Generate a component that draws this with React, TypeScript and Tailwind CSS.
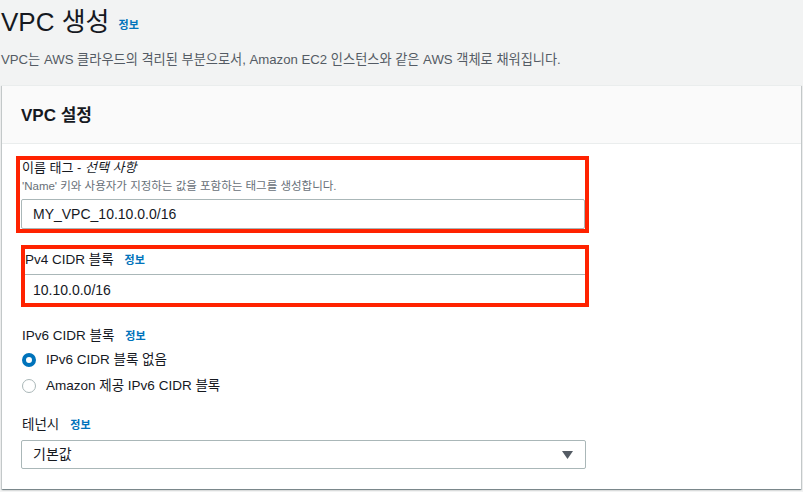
import type { ReactNode } from 'react'

const font = { fontFamily: '"Liberation Sans", "Noto Sans CJK KR", sans-serif' }

function InfoLink() {
  return <span className="ml-[11px] text-[11px] font-bold text-[#0073bb]">정보</span>
}

function Radio({ checked, children }: { checked?: boolean; children: ReactNode }) {
  return (
    <div className="flex h-[26px] items-center">
      <span
        className={`box-border h-[14px] w-[14px] rounded-full bg-white ${
          checked ? 'border-[4px] border-[#0073bb]' : 'border border-[#aab7b8]'
        }`}
      />
      <span className="ml-[10px] text-[13.5px] text-[#16191f]">{children}</span>
    </div>
  )
}

export default function App() {
  return (
    <div className="h-[492px] w-[803px] overflow-hidden bg-[#f2f3f3] text-[#16191f]" style={font}>
      <div className="flex h-[40px] items-center pt-[4px] pl-[1px]">
        <h1 className="text-[26px] leading-none font-normal">VPC 생성</h1>
        <span className="ml-[9px] mt-[7px] text-[11px] font-bold text-[#0073bb]">정보</span>
      </div>
      <p className="mt-[10px] h-[20px] pl-[1px] text-[13.2px] leading-[20px] text-[#545b64]">
        VPC는 AWS 클라우드의 격리된 부분으로서, Amazon EC2 인스턴스와 같은 AWS 객체로 채워집니다.
      </p>

      <section className="mt-[15px] ml-[2px] w-[799px] bg-white shadow-[0_1px_1px_0_rgba(0,28,36,0.3),1px_1px_1px_0_rgba(0,28,36,0.15),-1px_1px_1px_0_rgba(0,28,36,0.15)]">
        <div className="flex h-[59px] items-center border-y border-[#eaeded] bg-[#fafafa] pl-[19px]">
          <h2 className="mt-[2px] text-[17px] font-bold">VPC 설정</h2>
        </div>

        <div className="px-[19px] pt-[12px] pb-[20px]">
          {/* name tag, boxed */}
          <div className="-ml-[5px] w-[573px] border-4 border-[#ff2200] pl-[1px]">
            <div className="pl-[1px] text-[13px] leading-[15px]">
              이름 태그 - <i>선택 사항</i>
            </div>
            <div className="mt-[3px] pl-[1px] text-[11.5px] leading-[16px] text-[#687078]">
              'Name' 키와 사용자가 지정하는 값을 포함하는 태그를 생성합니다.
            </div>
            <div className="mt-[5px] flex h-[30px] items-center rounded-[2px] border border-[#aab7b8] pl-[11px] text-[14px]">
              MY_VPC_10.10.0.0/16
            </div>
          </div>

          {/* ipv4 cidr, boxed */}
          <div className="mt-[12px] w-[568px] border-4 border-[#ff2200]">
            <div className="flex h-[25px] items-start pt-[3px] text-[13.5px] leading-[16px]">
              Pv4 CIDR 블록
              <InfoLink />
            </div>
            <div className="flex h-[29px] items-center border-t border-[#aab7b8] pt-[2px] pl-[8px] text-[14px]">
              10.10.0.0/16
            </div>
          </div>

          <div className="mt-[20px] flex h-[18px] items-center pl-[1px] text-[13.5px]">
            IPv6 CIDR 블록
            <InfoLink />
          </div>
          <div className="mt-[2px] pl-[1px]">
            <Radio checked>IPv6 CIDR 블록 없음</Radio>
            <Radio>Amazon 제공 IPv6 CIDR 블록</Radio>
          </div>

          <div className="mt-[17px] flex h-[18px] items-center pl-[1px] text-[13.5px]">
            테넌시
            <InfoLink />
          </div>
          <div className="mt-[6px] flex h-[29px] w-[565px] items-center justify-between rounded-[2px] border border-[#aab7b8] pr-[12px] pl-[11px] text-[14px]">
            <span>기본값</span>
            <svg width="11" height="8" viewBox="0 0 11 8">
              <path d="M0 0h11L5.5 8z" fill="#545b64" />
            </svg>
          </div>
        </div>
      </section>
    </div>
  )
}
